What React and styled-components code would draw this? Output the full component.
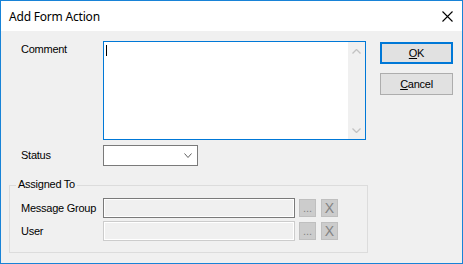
import React from 'react';
import styled, { createGlobalStyle } from 'styled-components';

const Global = createGlobalStyle`
  html, body { margin: 0; padding: 0; background: #ffffff; }
  * { box-sizing: border-box; }
`;

const Window = styled.div`
  width: 463px;
  height: 264px;
  border: 1px solid #1883d7;
  display: flex;
  flex-direction: column;
  background: #f0f0f0;
  font-family: "Liberation Sans", Arial, sans-serif;
  font-size: 11px;
  letter-spacing: -0.25px;
  color: #000;
`;

const TitleBar = styled.div`
  height: 30px;
  flex: none;
  background: #ffffff;
  display: flex;
  align-items: center;
  justify-content: space-between;
  padding: 0 9px 0 8px;
`;

const Title = styled.span`
  font-family: "Noto Sans", "Open Sans", sans-serif;
  font-size: 12px;
  letter-spacing: -0.2px;
  padding-top: 1px;
`;

const Client = styled.div`
  flex: 1;
  display: flex;
  padding: 10px 0 0 8px;
`;

const LeftCol = styled.div`
  width: 359px;
  display: flex;
  flex-direction: column;
`;

const FieldRow = styled.div`
  display: flex;
  align-items: ${p => (p.$top ? 'flex-start' : 'center')};
  padding-left: 12px;
  margin-top: ${p => p.$mt || 0}px;
`;

const Label = styled.span`
  width: 82px;
  flex: none;
  line-height: 13px;
  padding-top: ${p => p.$pt || 0}px;
`;

const Memo = styled.div`
  width: 263px;
  height: 99px;
  border: 1px solid #0078d7;
  background: #ffffff;
  display: flex;
  justify-content: space-between;
`;

const Caret = styled.span`
  display: block;
  width: 1px;
  height: 11px;
  background: #000;
  margin: 3px 0 0 2px;
`;

const VScroll = styled.div`
  width: 17px;
  background: #f0f0f0;
  display: flex;
  flex-direction: column;
  justify-content: space-between;
  align-items: center;
  padding: 7px 0 6px;
`;

const Combo = styled.div`
  width: 95px;
  height: 21px;
  border: 1px solid #7a7a7a;
  background: #ffffff;
  display: flex;
  align-items: center;
  justify-content: flex-end;
  padding-right: 5px;
`;

const Group = styled.div`
  position: relative;
  margin-top: 19px;
  height: 68px;
  border: 1px solid #dcdcdc;
  padding: 12px 0 0 11px;
  display: flex;
  flex-direction: column;
  gap: 3px;
`;

const Caption = styled.span`
  position: absolute;
  left: 6px;
  top: -8px;
  padding: 0 2px;
  background: #f0f0f0;
  line-height: 13px;
`;

const GroupRow = styled.div`
  display: flex;
  align-items: center;
  height: 20px;
`;

const TextBox = styled.div`
  width: 192px;
  height: 20px;
  border: 1px solid ${p => (p.$dark ? '#7a7a7a' : '#cccccc')};
  box-shadow: inset 0 0 0 1px #ffffff;
  background: #f0f0f0;
`;

const SmallBtn = styled.div`
  width: 17px;
  height: 18px;
  margin-left: ${p => p.$ml}px;
  background: #cccccc;
  border: 1px solid #bfbfbf;
  color: #838383;
  display: flex;
  align-items: ${p => (p.$dots ? 'flex-end' : 'center')};
  justify-content: center;
  letter-spacing: 0;
  font-size: ${p => (p.$dots ? '11px' : '14px')};
  line-height: ${p => (p.$dots ? '13px' : '16px')};
  padding-bottom: ${p => (p.$dots ? '1px' : '0')};
`;

const RightCol = styled.div`
  margin-left: 12px;
  padding-top: 1px;
  display: flex;
  flex-direction: column;
  gap: 9px;
`;

const Button = styled.div`
  width: 73px;
  height: 22px;
  background: #e1e1e1;
  border: ${p => (p.$default ? '2px solid #0078d7' : '1px solid #adadad')};
  display: flex;
  align-items: center;
  justify-content: center;
  font-size: 11px;
`;

const Mn = styled.span`
  text-decoration: underline;
  text-underline-offset: 1px;
`;

const Chevron = ({ up, color, w = 9, h = 5, sw = 1.3 }) => (
  <svg width={w} height={h} viewBox={`0 0 ${w} ${h}`} style={{ display: 'block' }}>
    <polyline
      points={up ? `0.5,${h - 0.5} ${w / 2},0.5 ${w - 0.5},${h - 0.5}` : `0.5,0.5 ${w / 2},${h - 0.5} ${w - 0.5},0.5`}
      fill="none"
      stroke={color}
      strokeWidth={sw}
    />
  </svg>
);

const CloseIcon = () => (
  <svg width="11" height="11" viewBox="0 0 11 11" style={{ display: 'block' }}>
    <path d="M0.5 0.5 L10.5 10.5 M10.5 0.5 L0.5 10.5" stroke="#000" strokeWidth="1.1" fill="none" />
  </svg>
);

export default function App() {
  return (
    <>
      <Global />
      <Window>
        <TitleBar>
          <Title>Add Form Action</Title>
          <CloseIcon />
        </TitleBar>
        <Client>
          <LeftCol>
            <FieldRow $top>
              <Label $pt={2}>Comment</Label>
              <Memo>
                <Caret />
                <VScroll>
                  <Chevron up color="#c2c2c2" />
                  <Chevron color="#c2c2c2" />
                </VScroll>
              </Memo>
            </FieldRow>
            <FieldRow $mt={5}>
              <Label>Status</Label>
              <Combo>
                <Chevron color="#606060" w={8} h={5} sw={1} />
              </Combo>
            </FieldRow>
            <Group>
              <Caption>Assigned To</Caption>
              <GroupRow>
                <Label>Message Group</Label>
                <TextBox $dark />
                <SmallBtn $ml={4} $dots>...</SmallBtn>
                <SmallBtn $ml={5}>X</SmallBtn>
              </GroupRow>
              <GroupRow>
                <Label>User</Label>
                <TextBox />
                <SmallBtn $ml={4} $dots>...</SmallBtn>
                <SmallBtn $ml={5}>X</SmallBtn>
              </GroupRow>
            </Group>
          </LeftCol>
          <RightCol>
            <Button $default><Mn>O</Mn>K</Button>
            <Button><Mn>C</Mn>ancel</Button>
          </RightCol>
        </Client>
      </Window>
    </>
  );
}
